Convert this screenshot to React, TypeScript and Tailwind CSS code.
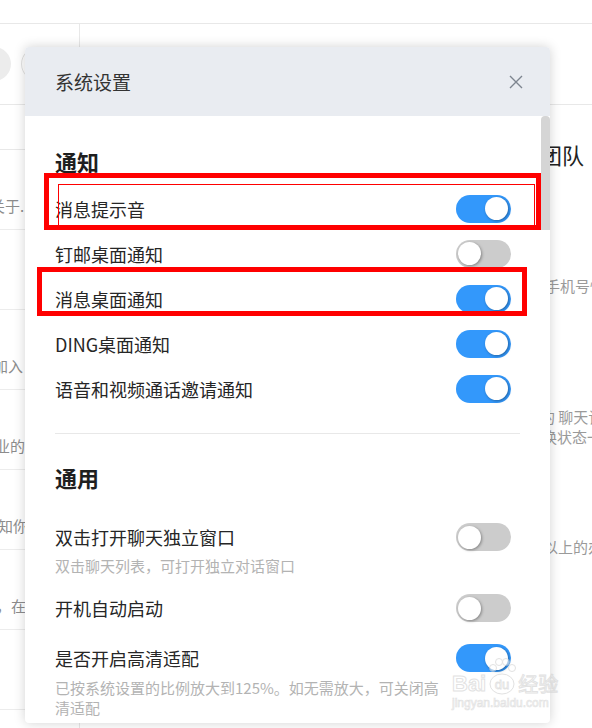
import React from "react";

const FONT = { fontFamily: '"Noto Sans CJK SC", "Noto Sans", sans-serif' };

function Toggle({ on }: { on: boolean }) {
  return (
    <div
      className={
        "relative w-[55px] h-[28px] rounded-full flex items-center shrink-0 " +
        (on ? "bg-[#3398fb] justify-end pr-[3px]" : "bg-[#cccccc] justify-start pl-[2px]")
      }
    >
      <div className="w-[23px] h-[23px] rounded-full bg-white shadow-[1px_1px_3px_rgba(0,0,0,0.35)]" />
    </div>
  );
}

function Row({ label, on }: { label: string; on: boolean }) {
  return (
    <div className="h-[45px] flex items-center justify-between">
      <span className="text-[18px] leading-[24px] text-[#262626]">{label}</span>
      <Toggle on={on} />
    </div>
  );
}

export default function App() {
  const leftRows = [
    { text: "关于..", ml: "ml-[-10px]" },
    { text: "", ml: "" },
    { text: "请加入", ml: "ml-[-22px]" },
    { text: "企业的", ml: "ml-[-20px]" },
    { text: "通知你", ml: "ml-[-17px]" },
    { text: "，在", ml: "ml-[-4px]" },
    { text: "", ml: "" },
  ];
  return (
    <div className="relative w-[592px] h-[728px] overflow-hidden bg-white" style={FONT}>
      {/* background page */}
      <div className="h-[24px] border-b border-[#e8e8e8]" />
      <div className="flex h-[704px]">
        <div className="w-[80px] border-r border-[#e8e8e8] overflow-hidden shrink-0">
          <div className="h-[81px] border-b border-[#e8e8e8] flex items-center gap-[10px]">
            <div className="ml-[-23px] w-[34px] h-[34px] rounded-full bg-[#ececec] shrink-0" />
            <div className="w-[34px] h-[34px] rounded-full border border-[#e2e2e2] shrink-0" />
          </div>
          <div className="h-[45px] border-b border-[#e8e8e8]" />
          {leftRows.map((r, i) => (
            <div key={i} className="h-[80px] border-b border-[#ececec] pt-[46px] whitespace-nowrap">
              <div className={"text-[15px] leading-[20px] text-[#8c8c8c] " + r.ml}>{r.text}</div>
            </div>
          ))}
        </div>
        <div className="flex-1 overflow-hidden">
          <div className="h-[81px] border-b border-[#e8e8e8]" />
          <div className="pl-[460px] whitespace-nowrap">
            <div className="mt-[35px] text-[22px] leading-[28px] text-[#222]">团队</div>
            <div className="mt-[108px] ml-[5px] text-[15px] leading-[20px] text-[#9a9a9a]">手机号快</div>
            <div className="mt-[111px] text-[15px] leading-[20px] text-[#9a9a9a]">的 聊天记录</div>
            <div className="ml-[2px] text-[15px] leading-[19px] text-[#9a9a9a]">换状态一</div>
            <div className="mt-[91px] ml-[3px] text-[15px] leading-[20px] text-[#9a9a9a]">以上的办</div>
          </div>
        </div>
      </div>

      {/* modal */}
      <div className="absolute left-[25px] top-[47px] w-[525px] h-[676px] rounded-[4px] overflow-hidden bg-white shadow-[0_0_12px_rgba(0,0,0,0.18)]">
        <div className="h-[69px] bg-[#e9ecf1] flex items-center justify-between pl-[30px] pr-[27px]">
          <span className="text-[19px] leading-[26px] text-[#333]">系统设置</span>
          <svg width="14" height="14" viewBox="0 0 14 14" fill="none">
            <path d="M1 1L13 13M13 1L1 13" stroke="#7d858f" strokeWidth="1.4" />
          </svg>
        </div>
        <div className="flex h-[607px]">
          <div className="flex-1 px-[30px] overflow-hidden">
            <div className="mt-[30px] h-[30px] leading-[30px] text-[22px] font-bold text-[#1f1f1f]">通知</div>
            <div className="mt-[10px]">
              <Row label="消息提示音" on />
              <Row label="钉邮桌面通知" on={false} />
              <Row label="消息桌面通知" on />
              <Row label="DING桌面通知" on />
              <Row label="语音和视频通话邀请通知" on />
            </div>
            <div className="mt-[22px] h-px w-[465px] bg-[#e8e8e8]" />
            <div className="mt-[28px] h-[30px] leading-[30px] text-[22px] font-bold text-[#1f1f1f]">通用</div>
            <div className="mt-[31px] h-[28px] flex items-center justify-between">
              <span className="text-[18px] leading-[24px] text-[#262626]">双击打开聊天独立窗口</span>
              <Toggle on={false} />
            </div>
            <div className="mt-[5px] text-[15px] leading-[20px] text-[#b3b3b3]">双击聊天列表，可打开独立对话窗口</div>
            <div className="mt-[18px] h-[28px] flex items-center justify-between">
              <span className="text-[18px] leading-[24px] text-[#262626]">开机自动启动</span>
              <Toggle on={false} />
            </div>
            <div className="mt-[22px] h-[28px] flex items-center justify-between">
              <span className="text-[18px] leading-[24px] text-[#262626]">是否开启高清适配</span>
              <Toggle on />
            </div>
            <div className="mt-[6px] w-[390px] text-[15px] leading-[20px] text-[#b3b3b3]">
              已按系统设置的比例放大到125%。如无需放大，可关闭高清适配
            </div>
          </div>
          <div className="w-[9px] shrink-0">
            <div className="h-[114px] w-[9px] bg-[#d5d5d5] rounded-t-[4px]" />
          </div>
        </div>
      </div>

      {/* red annotation boxes */}
      <div className="absolute left-[44px] top-[173px] w-[497px] h-[57px] border-[5px] border-[#ff0000]" />
      <div className="absolute left-[58px] top-[184px] w-[477px] h-[42px] border border-[#ff0000]" />
      <div className="absolute left-[37px] top-[267px] w-[490px] h-[49px] border-[5px] border-[#ff0000]" />

      {/* watermark */}
      <div className="absolute left-[452px] top-[656px] opacity-60 pointer-events-none">
        <div className="flex items-end">
          <span className="text-[22px] leading-[24px] font-bold text-white [-webkit-text-stroke:1px_#cfcfcf]" style={{ fontFamily: '"Liberation Sans", sans-serif' }}>
            Bai
          </span>
          <svg width="30" height="40" viewBox="0 0 30 40" className="mx-[1px]">
            <circle cx="6" cy="12" r="3.5" fill="white" stroke="#cfcfcf" />
            <circle cx="12" cy="6" r="3.5" fill="white" stroke="#cfcfcf" />
            <circle cx="19" cy="6" r="3.5" fill="white" stroke="#cfcfcf" />
            <circle cx="25" cy="12" r="3.5" fill="white" stroke="#cfcfcf" />
            <ellipse cx="15" cy="28" rx="12" ry="10" fill="white" stroke="#cfcfcf" />
            <text x="15" y="33" textAnchor="middle" fontSize="13" fill="white" stroke="#cfcfcf" strokeWidth="0.8" fontFamily="Liberation Sans, sans-serif">du</text>
          </svg>
          <span className="text-[20px] leading-[24px] text-white [-webkit-text-stroke:1px_#cfcfcf]">经验</span>
        </div>
        <div className="text-[12px] leading-[14px] text-white [-webkit-text-stroke:0.7px_#cfcfcf]" style={{ fontFamily: '"Liberation Sans", sans-serif' }}>
          jingyan.baidu.com
        </div>
      </div>
    </div>
  );
}
